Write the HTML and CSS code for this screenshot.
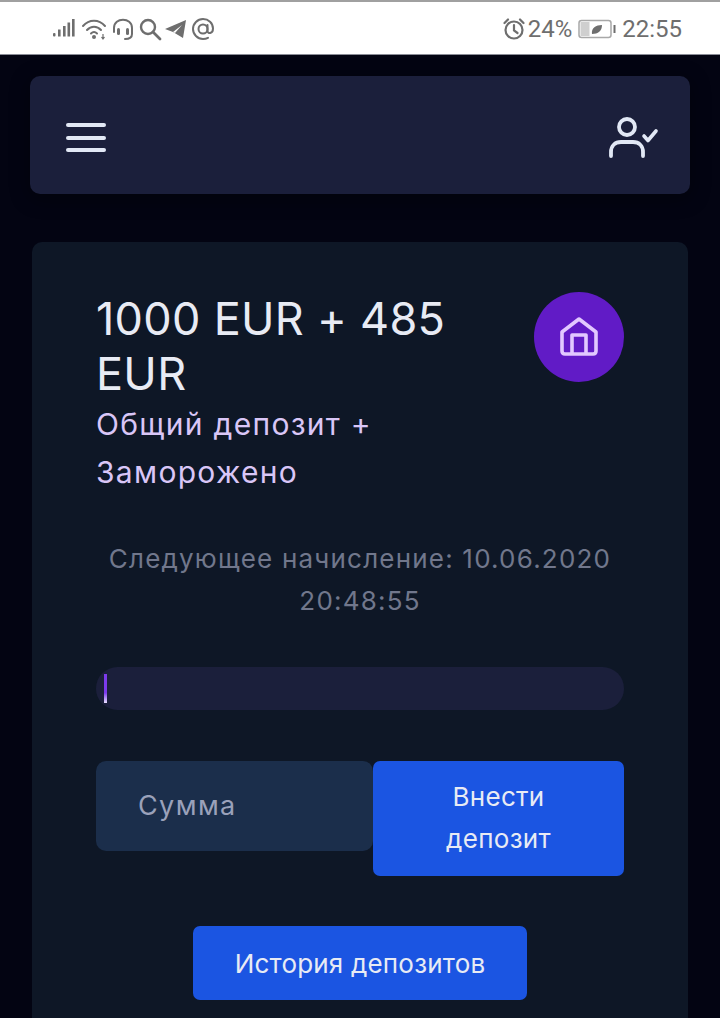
FILE: index.html
```html
<!DOCTYPE html>
<html lang="ru">
<head>
<meta charset="utf-8">
<title>Депозит</title>
<link rel="stylesheet" href="styles.css">
</head>
<body>
<div class="status">
  <div class="status-left">
    <svg class="si" width="26" height="24" viewBox="0 0 26 24"><g fill="#6e6e6e"><rect x="1" y="16" width="2.500" height="3.500" rx="1"/><rect x="6" y="12.500" width="2.600" height="7"/><rect x="11" y="9" width="2.600" height="10.500"/><rect x="15.500" y="5.500" width="2.600" height="14"/><rect x="20" y="2" width="2.600" height="17.500"/></g></svg>
    <svg class="si" width="28" height="24" viewBox="0 0 28 24"><g fill="none" stroke="#6e6e6e" stroke-width="2" stroke-linecap="round"><path d="M2 9C8 2 18 2 24 9"/><path d="M6 13C10 8.500 16 8.500 20 13"/><path d="M10 16.500C12 14.500 14 14.500 16 16.500"/></g><circle cx="13" cy="20" r="2" fill="#6e6e6e"/><path d="M22 17v5M20.500 20l1.500 2 1.500-2" stroke="#6e6e6e" fill="none" stroke-width="1.200"/></svg>
    <svg class="si" width="24" height="24" viewBox="0 0 24 24"><g fill="none" stroke="#6e6e6e" stroke-width="2" stroke-linecap="round"><path d="M3 15V11C3 0 21 0 21 11V17C21 20 19 22 14 22"/></g><rect x="6" y="11" width="3" height="7" rx="1.500" fill="#6e6e6e"/><rect x="15" y="11" width="3" height="7" rx="1.500" fill="#6e6e6e"/></svg>
    <svg class="si" width="24" height="24" viewBox="0 0 24 24"><circle cx="10" cy="10" r="7" fill="none" stroke="#6e6e6e" stroke-width="2.400"/><path d="M15 15l7 7" stroke="#6e6e6e" stroke-width="2.800" stroke-linecap="round"/></svg>
    <svg class="si" width="24" height="24" viewBox="0 0 24 24"><path d="M1 12L22 3 19 21 9 15z" fill="#6e6e6e"/><path d="M9 15L18 8 11 16" fill="#fff"/></svg>
    <svg class="si" width="24" height="24" viewBox="0 0 24 24"><g fill="none" stroke="#6e6e6e" stroke-width="2" stroke-linecap="round"><circle cx="12" cy="12" r="4.500"/><path d="M16.500 8V14C16.500 17 22 17 22 11.500C22 6 17.500 2 12 2C6.500 2 2 6.500 2 12C2 17.500 6.500 22 12 22C14 22 15.500 21.600 17 20.800"/></g></svg>
  </div>
  <div class="status-right">
    <svg class="si" width="22" height="24" viewBox="0 0 22 24"><g fill="none" stroke="#6e6e6e" stroke-width="2.200" stroke-linecap="round"><circle cx="11" cy="13" r="8.500"/><path d="M11 8v5.500l3.500 2.500"/><path d="M1.500 6L5 2.500M20.500 6L17 2.500"/></g></svg>
    <span class="pct">24%</span>
    <svg class="si batt" width="38" height="24" viewBox="0 0 38 24"><rect x="1" y="3.500" width="32" height="17" rx="2.500" fill="#fff" stroke="#a8a8a8" stroke-width="1.500"/><rect x="2.500" y="5" width="9" height="14" fill="#cfcfcf"/><path d="M14 17C13 11 18 8 24 8C24 14 20 17 14 17Z" fill="#6e6e6e"/><rect x="35.500" y="8" width="2" height="8" fill="#6e6e6e"/></svg>
    <span class="time">22:55</span>
  </div>
</div>
<div class="page">
  <header class="nav">
    <div class="burger"><span></span><span></span><span></span></div>
    <svg width="50" height="44" viewBox="0 0 50 44"><g fill="none" stroke="#e2e8f5" stroke-width="3.800" stroke-linecap="round" stroke-linejoin="round"><circle cx="18" cy="11" r="8"/><path d="M2 40V36C2 30 6 26 12 26H24C30 26 34 30 34 36V40"/><path d="M35 20L39 24.500 47 15" stroke-width="3.600"/></g></svg>
  </header>
  <main class="card">
    <div class="top">
      <div class="titles">
        <h1>1000 EUR + 485 EUR</h1>
        <p class="sub">Общий депозит + Заморожено</p>
      </div>
      <div class="badge">
        <svg width="42" height="42" viewBox="0 0 42 42"><g fill="none" stroke="#e2c8ff" stroke-width="3.600" stroke-linejoin="round"><path d="M21 3L38 16V35C38 37 37 38 35 38H7C5 38 4 37 4 35V16Z"/><path d="M14 38V19H28V38"/></g></svg>
      </div>
    </div>
    <p class="next">Следующее начисление: 10.06.2020 20:48:55</p>
    <div class="progress"><div class="fill" style="width:3px"></div></div>
    <div class="form">
      <div class="input">Сумма</div>
      <button class="btn btn-dep">Внести депозит</button>
    </div>
    <div class="hist"><button class="btn btn-hist">История депозитов</button></div>
  </main>
</div>
</body>
</html>
```
FILE: styles.css
```css
* { box-sizing: border-box; }
html, body { margin: 0; padding: 0; }
body {
  width: 720px;
  height: 1018px;
  overflow: hidden;
  background: #030412;
  font-family: "Inter", "Noto Sans", sans-serif;
}
.status {
  height: 55px;
  background: #fff;
  border-top: 2px solid #a0a0a0;
  border-bottom: 1px solid #8a8c96;
  display: flex;
  justify-content: space-between;
  align-items: center;
  padding: 1px 38px 0 52px;
  color: #6e6e6e;
  font-family: "Roboto", sans-serif;
  font-size: 24px;
}
.status-left, .status-right { display: flex; align-items: center; }
.status-left { gap: 2.600px; }
.status-right { gap: 3px; }
.si { display: block; }
.batt { margin: 0 0 0 3px; }
.time { margin-left: 3px; }
.page { padding: 21px 30px 0; }
.nav {
  height: 118px;
  background: #1b1f3b;
  border-radius: 10px;
  display: flex;
  justify-content: space-between;
  align-items: center;
  padding: 5px 31px 0 36px;
  box-shadow: 0 4px 20px rgba(0,0,0,.4);
}
.burger { display: flex; flex-direction: column; gap: 8.500px; }
.burger span { display: block; width: 40px; height: 4px; border-radius: 2px; background: #e2e8f5; }
.card {
  margin: 48px 2px 0;
  height: 800px;
  background: #0e1726;
  border-radius: 10px;
  padding: 50px 64px 0;
}
.top { display: flex; justify-content: space-between; align-items: flex-start; }
.titles { width: 410px; }
h1 {
  margin: -1px 0 0;
  font-size: 45px;
  font-weight: 400;
  line-height: 55px;
  letter-spacing: .3px;
  color: #e8ebf4;
}
.sub {
  margin: -1px 0 0;
  font-size: 30px;
  line-height: 48px;
  letter-spacing: 1.300px;
  color: #d9c6f7;
}
.badge {
  width: 90px;
  height: 90px;
  border-radius: 50%;
  background: #611bc6;
  display: flex;
  align-items: center;
  justify-content: center;
}
.next {
  margin: 42px 0 0;
  font-size: 26px;
  line-height: 42px;
  letter-spacing: 1.200px;
  text-align: center;
  color: #71778c;
}
.progress {
  margin-top: 45px;
  height: 43px;
  border-radius: 22px;
  background: #1b1f3b;
  padding: 7px 8px;
}
.fill { height: 29px; background: linear-gradient(#7c3aed 65%, #e9e0ff); }
.form { display: flex; align-items: flex-start; margin-top: 51px; }
.input {
  width: 277px;
  height: 90px;
  padding: 0 42px 2px;
  background: #1b2e4b;
  border-radius: 10px;
  display: flex;
  align-items: center;
  font-size: 27px;
  letter-spacing: 1.400px;
  color: #9aa1ba;
}
.btn {
  border: 0;
  background: #1b55e2;
  color: #e8ebf4;
  font-family: inherit;
  border-radius: 7px;
}
.btn-dep {
  width: 251px;
  height: 115px;
  font-size: 26px;
  line-height: 42px;
  letter-spacing: .3px;
  padding: 0 50px 2px;
}
.hist { display: flex; justify-content: center; margin-top: 50px; }
.btn-hist { width: 334px; height: 74px; font-size: 26px; letter-spacing: .2px; }
```
